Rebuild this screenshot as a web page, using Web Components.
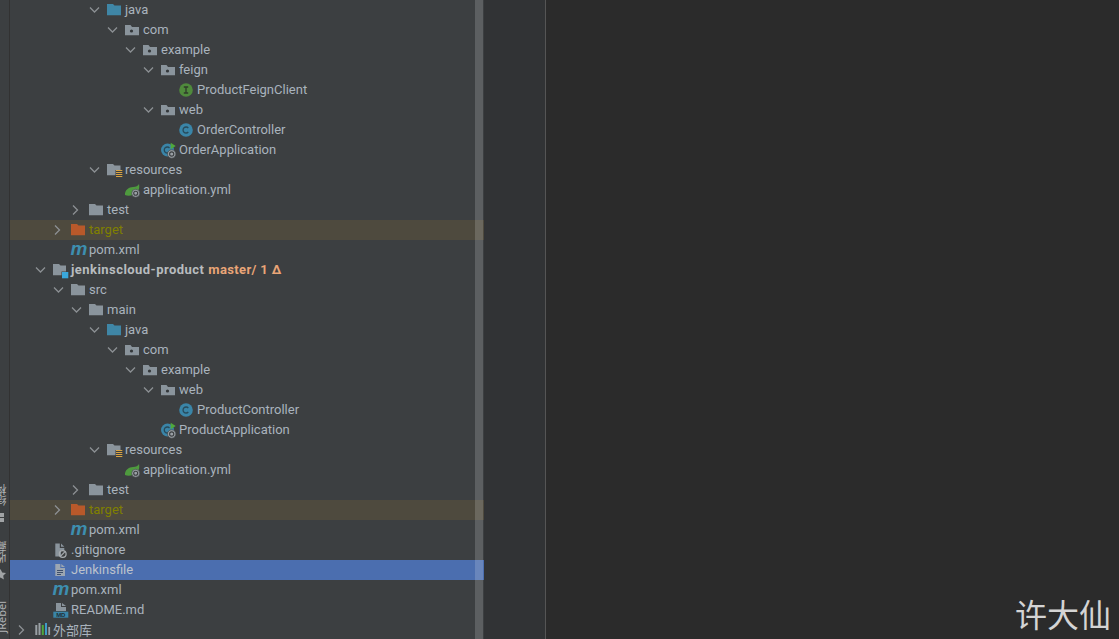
<!DOCTYPE html>
<html><head><meta charset="utf-8"><style>
html,body{margin:0;height:100%;overflow:hidden;background:#2b2b2b}
</style></head><body>
<ide-window></ide-window>
<script>
const gear=(x,y,r)=>`<circle cx="${x}" cy="${y}" r="${r}" fill="#9aa0a5" stroke="#3c3f41" stroke-width=".6"/><circle cx="${x}" cy="${y}" r="${r*.5}" fill="none" stroke="#3c3f41" stroke-width="1.1"/>`;
const F='#8a949c';
const I={
 chevD:'<path d="M1 3.500 L5.500 8 L10 3.500" fill="none" stroke="#8c9094" stroke-width="1.300"/>',
 folder:`<path d="M0 2h6l1.500 1.500H14V13.300H0z" fill="${F}"/>`,
 java:'<path d="M0 2h6l1.500 1.500H14V13.300H0z" fill="#3f86a6"/>',
 pkg:`<path d="M0 3h5.500L7 5h7v8.300H0z" fill="${F}"/><circle cx="6.500" cy="9" r="1.600" fill="#33373a"/>`,
 res:`<path d="M0 2h6l1.500 1.500H13.500V8H8.500V13.300H0z" fill="${F}"/><path d="M9 8.500h6.300M9 10.500h6.300M9 12.500h6.300M9 14.500h6.300" stroke="#d9a343" stroke-width="1"/>`,
 target:'<path d="M0 2h6l1.500 1.500H14V13.300H0z" fill="#b9592a"/>',
 iface:'<circle cx="7" cy="8" r="6.800" fill="#4f8a3c"/><path d="M4.800 5h4.400M7 5v6M4.800 11h4.400" stroke="#2f3a2a" stroke-width="1.300" fill="none"/>',
 cls:'<circle cx="7" cy="8" r="6.800" fill="#3a85a8"/><path d="M9.300 6a3 3 0 1 0 0 4" stroke="#284a5a" stroke-width="1.300" fill="none"/>',
 app:`<circle cx="6.500" cy="8" r="6.500" fill="#3a85a8"/><path d="M8.500 6a3 3 0 1 0 0 4" stroke="#284a5a" stroke-width="1.300" fill="none"/><path d="M9.700 .7v6.500l5-3.200z" fill="#4fa83c"/>${gear(10.7,12,4.200)}`,
 yml:`<path d="M0 13C-.5 8 4 5 8 5c3 0 5-1 6-3 1 5-1 10-6 11-3 1-6 1-8 0z" fill="#4e9a3e"/>${gear(10.7,11.300,4)}`,
 maven:'<text x="-.5" y="13.200" font-family="Liberation Sans,sans-serif" font-style="italic" font-weight="700" font-size="19" fill="#3d8eb0">m</text>',
 mod:`<path d="M0 2h6l1.500 1.500H13V9.500H8.500V13.300H0z" fill="${F}"/><rect x="9" y="10" width="6.300" height="6.300" fill="#3aa8dc"/>`,
 ignore:`<path d="M2.300 1.500h4.500v4.500h4.500v2.500H8V14.500H2.300z" fill="${F}"/><path d="M8 1.500l3.300 3.300H8z" fill="${F}"/><circle cx="9.700" cy="12" r="3.400" fill="none" stroke="#a8adb1" stroke-width="1.200"/><path d="M7.400 14.300l4.600-4.600" stroke="#a8adb1" stroke-width="1.200"/>`,
 file:'<path d="M2.300 2h5v4h4.700V14H2.300z" fill="#9ca6b2"/><path d="M8.300 2l3.700 3H8.300z" fill="#9ca6b2"/><path d="M4 8.500h6M4 10.500h6M4 12.500h4" stroke="#3f4f6b" stroke-width="1"/>',
 md:`<path d="M3 1h5v4h5v4H3z" fill="${F}"/><path d="M9 1l4 3H9z" fill="${F}"/><rect x=".3" y="9.700" width="15" height="6" fill="#3a85a8"/><text x="7.800" y="15" text-anchor="middle" font-family="Liberation Sans,sans-serif" font-weight="700" font-size="6" fill="#1f2f38">MD</text>`,
 lib:'<path d="M1.300 3v10" stroke="#9aa0a5" stroke-width="2"/><path d="M4.500 1v12" stroke="#9aa0a5" stroke-width="2"/><path d="M7.800 3v10" stroke="#4fa83c" stroke-width="2"/><path d="M11 1v12" stroke="#3f9bc8" stroke-width="2"/><path d="M14.200 5v8" stroke="#9aa0a5" stroke-width="1.800"/>'
};
class TreeRow extends HTMLElement{
 constructor(){super();this.attachShadow({mode:'open'})}
 connectedCallback(){
  const d=+this.getAttribute('depth'),ic=this.getAttribute('icon'),a=this.getAttribute('arrow');
  const arrow=a?`<svg width="11" height="12" viewBox="0 0 11 12" style="${a==='r'?'transform:translateX(-1px) rotate(-90deg)':''}">${I.chevD}</svg>`:'';
  this.shadowRoot.innerHTML=`<style>
  :host{display:flex;align-items:center;height:20px;padding-left:calc(7px + 18px*${d});box-sizing:border-box;white-space:pre;color:var(--tree-fg)}
  :host([state=excluded]){background:#4e4a3e;color:#808000}
  :host([state=selected]){background:#4b6eaf;color:#bbc2cc}
  .a{width:18px;margin-left:-22px;margin-right:4px;display:flex;justify-content:center;flex:none}
  .i{width:16px;height:16px;margin-right:2px;flex:none;overflow:visible}
  .t{position:relative;top:-1px}
  </style><span class="a">${arrow}</span><svg class="i" viewBox="0 0 16 16">${I[ic]}</svg><span class="t"><slot></slot></span>`;
 }
}
customElements.define('tree-row',TreeRow);
class ProjectTree extends HTMLElement{
 constructor(){super();this.attachShadow({mode:'open'}).innerHTML=`<style>
 :host{display:block;flex:1;min-width:0;font:13px Roboto,"Noto Sans CJK SC",sans-serif;--tree-fg:#a9b3bd}
 </style><slot></slot>`}
}
customElements.define('project-tree',ProjectTree);
class ScrollTrack extends HTMLElement{
 constructor(){super();this.attachShadow({mode:'open'}).innerHTML=`<style>:host{position:absolute;top:0;bottom:0;right:1px;width:8px;background:rgba(255,255,255,.17)}</style>`}
}
customElements.define('scroll-track',ScrollTrack);
class SideStrip extends HTMLElement{
 constructor(){super();this.attachShadow({mode:'open'}).innerHTML=`<style>
 :host{display:block;position:relative;width:9px;background:#3c3f41;border-right:1px solid #323232;overflow:hidden;flex:none;font:11px "Noto Sans","Noto Sans CJK SC",sans-serif;color:#b0b3b5}
 span{position:absolute;left:-5px;writing-mode:vertical-rl;transform:rotate(180deg);line-height:14px;white-space:nowrap}
 svg{position:absolute;left:-5px}
 </style><span style="top:484px">结构</span><svg width="10" height="10" style="top:513px"><path d="M0 0h4v4H0zM5 0h4v4H5zM0 5h4v4H0zM5 5h4v4H5z" fill="#a0a3a5"/></svg><span style="top:541px">收藏</span><svg width="11" height="11" style="top:569px"><path d="M5.500 0l1.700 3.600 3.800.5-2.800 2.600.7 3.800-3.400-1.900-3.400 1.900.7-3.800L0 4.100l3.800-.5z" fill="#a0a3a5"/></svg><span style="top:601px">JRebel</span>`}
}
customElements.define('side-strip',SideStrip);
class IdeWindow extends HTMLElement{
 constructor(){super();const s=this.attachShadow({mode:'open'});
 const R=(d,i,a,t,st)=>`<tree-row depth="${d}" icon="${i}"${a?` arrow="${a}"`:''}${st?` state="${st}"`:''}>${t}</tree-row>`;
 const rows=[
 R(5,'java','d','java'),R(6,'pkg','d','com'),R(7,'pkg','d','example'),R(8,'pkg','d','feign'),R(9,'iface','','ProductFeignClient'),R(8,'pkg','d','web'),R(9,'cls','','OrderController'),R(8,'app','','OrderApplication'),R(5,'res','d','resources'),R(6,'yml','','application.yml'),R(4,'folder','r','test'),R(3,'target','r','target','excluded'),R(3,'maven','','pom.xml'),
 R(2,'mod','d','<span style="font-weight:700;color:#b8bcbf;letter-spacing:.45px">jenkinscloud-product</span><span style="color:#e9a577;font-weight:700;margin-left:4px;letter-spacing:.35px">master/ 1 Δ</span>'),
 R(3,'folder','d','src'),R(4,'folder','d','main'),R(5,'java','d','java'),R(6,'pkg','d','com'),R(7,'pkg','d','example'),R(8,'pkg','d','web'),R(9,'cls','','ProductController'),R(8,'app','','ProductApplication'),R(5,'res','d','resources'),R(6,'yml','','application.yml'),R(4,'folder','r','test'),R(3,'target','r','target','excluded'),R(3,'maven','','pom.xml'),R(2,'ignore','','.gitignore'),R(2,'file','','Jenkinsfile','selected'),R(2,'maven','','pom.xml'),R(2,'md','','README.md'),R(1,'lib','r','外部库')
 ].join('');
 s.innerHTML=`<style>
 :host{display:flex;height:639px;width:1119px;overflow:hidden;background:#2b2b2b}
 .p{position:relative;width:474px;flex:none;background:#3c3f41}
 .g{width:61px;flex:none;background:#313335;border-right:1px solid #555}
 .e{flex:1;background:#2b2b2b;display:flex;align-items:flex-end;justify-content:flex-end;padding:0 8px 6px 0}
 .w{font:32px "Noto Sans CJK SC",sans-serif;color:#d4d4d4;line-height:40px}
 </style><side-strip></side-strip><div class="p"><project-tree>${rows}</project-tree><scroll-track></scroll-track></div><div class="g"></div><div class="e"><span class="w">许大仙</span></div>`;
 }
}
customElements.define('ide-window',IdeWindow);
</script></body></html>
